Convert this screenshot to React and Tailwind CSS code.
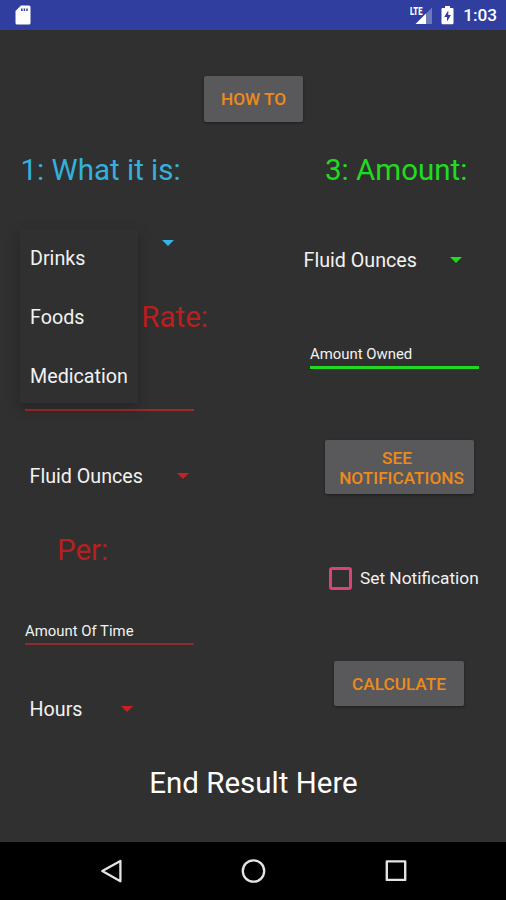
function Caret({ className }) {
  return (
    <svg className={`h-[6px] w-[12px] shrink-0 ${className}`} viewBox="0 0 12 6" fill="currentColor">
      <path d="M0 0H12L6 6Z" />
    </svg>
  );
}

function Spinner({ label, className = "", caretClass }) {
  return (
    <div className={`flex h-[40px] items-center justify-between ${className}`}>
      <span className="pt-[1px] text-[19.7px] text-[#f2f2f2]">{label}</span>
      <Caret className={caretClass} />
    </div>
  );
}

function Heading({ className, children }) {
  return <h2 className={`flex h-[40px] items-center pt-[2px] text-[29.5px] ${className}`}>{children}</h2>;
}

function Button({ className, children }) {
  return (
    <button
      className={`flex items-center justify-center rounded-[2px] bg-[#59595b] pt-[2px] text-center text-[17.2px] font-medium text-[#ec8b1b] shadow-[0_1px_3px_rgba(0,0,0,0.4)] ${className}`}
    >
      {children}
    </button>
  );
}

function StatusBar() {
  return (
    <header className="flex h-[30px] items-center justify-between bg-[#303f9f] pr-[9px] pl-[15px] text-white">
      <svg className="h-[20px] w-[16px]" viewBox="0 0 16 20">
        <path d="M6 .5H14Q15.5 .5 15.5 2V18Q15.5 19.5 14 19.5H2Q.5 19.5 .5 18V6Z" fill="#fff" />
        <path d="M6.8 3.4V6M9.4 3.4V6M12 3.4V6" stroke="#303f9f" strokeWidth="1.5" />
      </svg>
      <div className="flex items-center">
        <div className="relative h-[20px] w-[23px]">
          <svg className="h-[20px] w-[23px]" viewBox="0 0 23 20">
            <path d="M22 2.5V19H16V8.5Z" fill="#fff" opacity=".3" />
            <path d="M16 8.5V19H5.5Z" fill="#fff" />
          </svg>
          <span className="absolute top-[1px] left-0 origin-left scale-x-[0.66] text-[11.5px] leading-[10px] font-black">LTE</span>
        </div>
        <svg className="ml-[8px] h-[20px] w-[13px]" viewBox="0 0 13 20">
          <path d="M4 1H9V3H11.5Q12.5 3 12.5 4V18Q12.5 19.3 11.5 19.3H1.5Q.5 19.3 .5 18V4Q.5 3 1.5 3H4Z" fill="#fff" />
          <path d="M7.3 5.5L3.2 12H6V16.5L10 10H7.3Z" fill="#303f9f" />
        </svg>
        <span className="ml-[9px] pt-[2px] text-[17.2px] font-medium">1:03</span>
      </div>
    </header>
  );
}

function CategoryMenu() {
  return (
    <ul className="absolute top-[79px] left-[20px] w-[118px] bg-[#303030] pl-[10px] text-[19.7px] text-[#f2f2f2] shadow-[0_5px_12px_1px_rgba(0,0,0,0.22)]">
      <li className="flex h-[56px] items-center pt-[3px]">Drinks</li>
      <li className="flex h-[61px] items-center pt-[4px]">Foods</li>
      <li className="flex h-[57px] items-center pt-[4px]">Medication</li>
    </ul>
  );
}

export default function App() {
  return (
    <div className="flex h-[900px] w-[506px] flex-col bg-[#303030] font-['Roboto',sans-serif] leading-none">
      <StatusBar />
      <main className="flex h-[812px] flex-col pt-[46px]">
        <Button className="ml-[204px] h-[46px] w-[99px] shrink-0">HOW TO</Button>

        <div className="relative mt-[28px] flex h-[600px] shrink-0">
          <section className="flex w-[253px] flex-col">
            <Heading className="pl-[20.5px] text-[#33b0de]">1: What it is:</Heading>
            <Spinner label="" className="mt-[33px] w-[174px]" caretClass="ml-auto text-[#33b5e5]" />
            <Heading className="mt-[34px] w-[208px] justify-end text-[#b91f1f]">2: Rate:</Heading>
            <div className="mt-[72px] ml-[25px] h-[2px] w-[169px] bg-[#9f2828]" />
            <Spinner label="Fluid Ounces" className="mt-[45px] ml-[29.5px] w-[159.5px]" caretClass="text-[#cc1f1f]" />
            <Heading className="mt-[34px] pl-[57px] text-[#b91f1f]">Per:</Heading>
            <div className="mt-[51px] ml-[25px] h-[24px] w-[169px] border-b-[2px] border-[#8d2c2f] pt-[3px] text-[14.9px] text-[#f2f2f2]">
              Amount Of Time
            </div>
            <Spinner label="Hours" className="mt-[44px] ml-[29.5px] w-[103.5px]" caretClass="text-[#cc1f1f]" />
          </section>

          <section className="flex w-[253px] flex-col">
            <Heading className="pl-[72px] text-[#1fdc1f]">3: Amount:</Heading>
            <Spinner label="Fluid Ounces" className="mt-[50px] ml-[50.5px] w-[158.5px]" caretClass="text-[#18e018]" />
            <div className="mt-[65px] ml-[57px] h-[24px] w-[169px] border-b-[3px] border-[#22d822] pt-[2px] text-[14.9px] text-[#f2f2f2]">
              Amount Owned
            </div>
            <Button className="mt-[71px] ml-[72px] h-[54px] w-[149px] pl-[4px] leading-[20px]">
              <span>
                <span className="pr-[9px]">SEE</span>
                <br />
                NOTIFICATIONS
              </span>
            </Button>
            <label className="mt-[64px] ml-[76px] flex h-[40px] items-center text-[17.3px] text-[#f2f2f2]">
              <span className="mr-[8px] h-[23px] w-[23px] rounded-[3px] border-[3px] border-[#d9437a]" />
              <span className="pt-[2px]">Set Notification</span>
            </label>
            <Button className="mt-[63px] ml-[81px] h-[45px] w-[130px]">CALCULATE</Button>
          </section>

          <CategoryMenu />
        </div>

        <p className="mt-[13px] flex h-[40px] items-center justify-center pt-[2px] pl-[1px] text-[29.5px] text-white">
          End Result Here
        </p>
      </main>

      <nav className="flex h-[58px] shrink-0 items-center justify-between bg-black px-[98px]">
        <svg className="h-[26px] w-[26px]" viewBox="0 0 26 26" fill="none" stroke="#e4e4e4" strokeWidth="2.3" strokeLinejoin="round">
          <path d="M22.4 2.9V23.3L4.3 13.1Z" />
        </svg>
        <svg className="h-[26px] w-[26px]" viewBox="0 0 26 26" fill="none" stroke="#e4e4e4" strokeWidth="2.3">
          <circle cx="13.5" cy="13" r="10.7" />
        </svg>
        <svg className="h-[26px] w-[26px]" viewBox="0 0 26 26" fill="none" stroke="#e4e4e4" strokeWidth="2.4" strokeLinejoin="round">
          <path d="M4.8 3.4H23.2V21.9H4.8Z" />
        </svg>
      </nav>
    </div>
  );
}
